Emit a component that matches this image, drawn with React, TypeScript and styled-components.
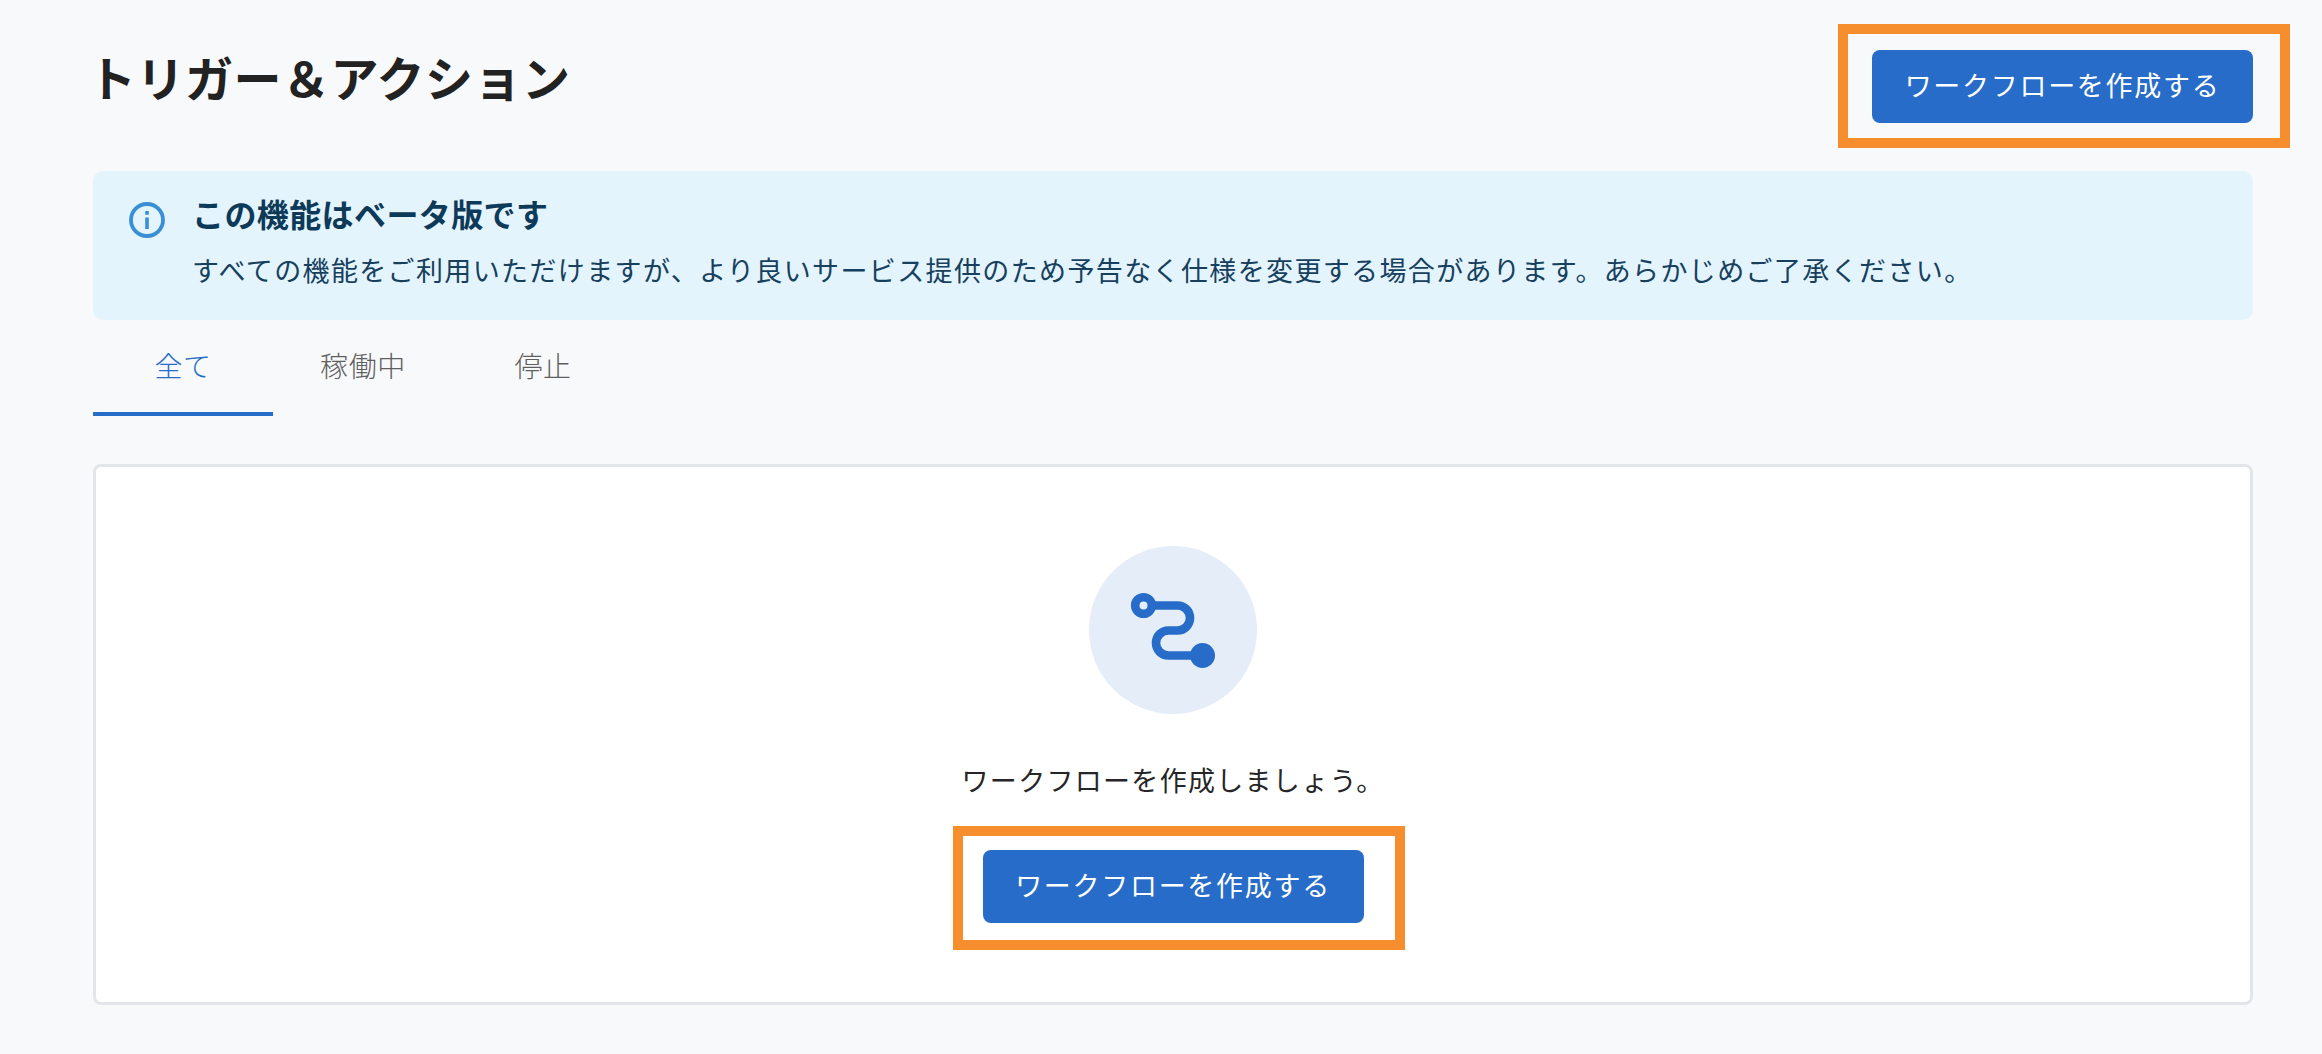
import { FC, ReactNode, useState } from "react";
import styled, { createGlobalStyle } from "styled-components";

const tabs = ["全て", "稼働中", "停止"];

const RouteIcon: FC = () => (
  <svg width="168" height="168" viewBox="0 0 168 168" fill="none">
    <path
      d="M54 59.5H88.5A12.5 12.5 0 0 1 88.5 84.5H79.5A12.5 12.5 0 0 0 79.5 109.5H113"
      stroke="#276cc8"
      strokeWidth="8.6"
    />
    <circle cx="54.5" cy="59.5" r="8.3" fill="#e5edf8" stroke="#276cc8" strokeWidth="8.6" />
    <circle cx="113.5" cy="109.5" r="12.5" fill="#276cc8" />
  </svg>
);

const InfoIcon: FC = () => (
  <InfoSvg width="36" height="36" viewBox="0 0 36 36" fill="none">
    <circle cx="18" cy="18" r="16" stroke="#3a8ed6" strokeWidth="3.8" />
    <rect x="16.2" y="15.5" width="3.6" height="11.5" fill="#3a8ed6" />
    <rect x="16.2" y="9" width="3.6" height="3.8" fill="#3a8ed6" />
  </InfoSvg>
);

const CreateButton: FC<{ frame: string; children: ReactNode }> = ({ frame, children }) => (
  <Highlight $frame={frame}>
    <PrimaryButton>{children}</PrimaryButton>
  </Highlight>
);

const App: FC = () => {
  const [activeTab, setActiveTab] = useState<string>("全て");

  return (
    <>
      <GlobalStyle />
      <Page>
        <Header>
          <Title>トリガー＆アクション</Title>
          <CreateButton frame="-26px -37px -25px -34px">ワークフローを作成する</CreateButton>
        </Header>
        <Notice>
          <InfoIcon />
          <NoticeBody>
            <NoticeTitle>この機能はベータ版です</NoticeTitle>
            <NoticeText>
              すべての機能をご利用いただけますが、より良いサービス提供のため予告なく仕様を変更する場合があります。あらかじめご了承ください。
            </NoticeText>
          </NoticeBody>
        </Notice>
        <TabBar>
          {tabs.map((tab) => (
            <Tab key={tab} $active={tab === activeTab} onClick={() => setActiveTab(tab)}>
              {tab}
            </Tab>
          ))}
        </TabBar>
        <EmptyCard>
          <IconCircle>
            <RouteIcon />
          </IconCircle>
          <EmptyText>ワークフローを作成しましょう。</EmptyText>
          <CreateButton frame="-24px -41.5px -27px -29.5px">ワークフローを作成する</CreateButton>
        </EmptyCard>
      </Page>
    </>
  );
};

export default App;

const GlobalStyle = createGlobalStyle`
  * {
    box-sizing: border-box;
  }
  body {
    margin: 0;
    background: #f8f9fb;
    font-family: "Noto Sans CJK JP", "Noto Sans", sans-serif;
  }
`;

const Page = styled.div`
  display: flex;
  flex-direction: column;
  min-height: 1054px;
  padding: 50px 69px 49px 93px;
`;

const Header = styled.header`
  display: flex;
  justify-content: space-between;
  align-items: flex-start;
  margin-bottom: 48px;
`;

const Title = styled.h1`
  margin: -3px 0 0 -5px;
  font-size: 48px;
  line-height: 58px;
  letter-spacing: 0.5px;
  font-weight: 700;
  color: #222222;
`;

const Highlight = styled.div<{ $frame: string }>`
  position: relative;
  &::after {
    content: "";
    position: absolute;
    inset: ${(props) => props.$frame};
    border: 10px solid #f78e2d;
    pointer-events: none;
  }
`;

const PrimaryButton = styled.button`
  display: block;
  width: 381px;
  height: 73px;
  padding: 0 0 4px;
  border: none;
  border-radius: 8px;
  background: #276cc8;
  color: #ffffff;
  font-family: inherit;
  font-size: 27px;
  letter-spacing: 1.7px;
  cursor: pointer;
`;

const Notice = styled.section`
  display: flex;
  gap: 27px;
  height: 149px;
  padding: 30px 36px 0;
  border-radius: 10px;
  background: #e3f4fc;
`;

const InfoSvg = styled.svg`
  flex: none;
  margin-top: 1px;
`;

const NoticeBody = styled.div`
  display: flex;
  flex-direction: column;
  gap: 16px;
  margin-top: -9px;
`;

const NoticeTitle = styled.h2`
  margin: 0;
  font-size: 32px;
  line-height: 42px;
  letter-spacing: 0.4px;
  font-weight: 700;
  color: #0e3a5a;
`;

const NoticeText = styled.p`
  margin: 0;
  font-size: 27px;
  line-height: 40px;
  letter-spacing: 1.37px;
  color: #17405f;
`;

const TabBar = styled.nav`
  display: flex;
`;

const Tab = styled.button<{ $active: boolean }>`
  width: 180px;
  height: 96px;
  padding: 0 0 2px;
  border: none;
  border-bottom: 4px solid ${(props) => (props.$active ? "#276cc8" : "transparent")};
  background: none;
  color: ${(props) => (props.$active ? "#276cc8" : "#5f5f5f")};
  font-family: inherit;
  font-size: 28px;
  font-weight: 300;
  letter-spacing: 0.6px;
  cursor: pointer;
`;

const EmptyCard = styled.main`
  display: flex;
  flex-direction: column;
  align-items: center;
  height: 541px;
  margin-top: 48px;
  padding-top: 79px;
  border: 3px solid #e3e5e9;
  border-radius: 8px;
  background: #ffffff;
`;

const IconCircle = styled.div`
  width: 168px;
  height: 168px;
  border-radius: 50%;
  background: #e5edf8;
`;

const EmptyText = styled.p`
  margin: 46px 0 50px;
  font-size: 27px;
  line-height: 40px;
  letter-spacing: 1.3px;
  color: #262626;
`;
